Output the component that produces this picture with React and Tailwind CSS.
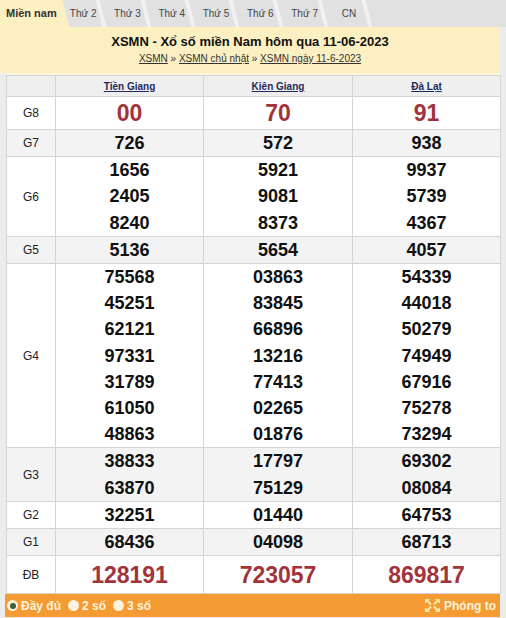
import React from 'react';

const tabs = ['Thứ 2', 'Thứ 3', 'Thứ 4', 'Thứ 5', 'Thứ 6', 'Thứ 7', 'CN'];
const provinces = ['Tiền Giang', 'Kiên Giang', 'Đà Lạt'];

const rows = [
  { label: 'G8', big: true, cols: [['00'], ['70'], ['91']] },
  { label: 'G7', cols: [['726'], ['572'], ['938']] },
  { label: 'G6', cols: [['1656', '2405', '8240'], ['5921', '9081', '8373'], ['9937', '5739', '4367']] },
  { label: 'G5', cols: [['5136'], ['5654'], ['4057']] },
  {
    label: 'G4',
    cols: [
      ['75568', '45251', '62121', '97331', '31789', '61050', '48863'],
      ['03863', '83845', '66896', '13216', '77413', '02265', '01876'],
      ['54339', '44018', '50279', '74949', '67916', '75278', '73294'],
    ],
  },
  { label: 'G3', cols: [['38833', '63870'], ['17797', '75129'], ['69302', '08084']] },
  { label: 'G2', cols: [['32251'], ['01440'], ['64753']] },
  { label: 'G1', cols: [['68436'], ['04098'], ['68713']] },
  { label: 'ĐB', big: true, special: true, cols: [['128191'], ['723057'], ['869817']] },
];

function ExpandIcon() {
  return (
    <svg width="15" height="13" viewBox="0 0 15 13" className="mr-[4px]">
      <g fill="#fbe7a8">
        <path d="M0 0 L5 0 L3.6 1.6 L6.8 4.8 L5.3 6.2 L2.1 3 L0 4.6 Z" />
        <path d="M15 0 L10 0 L11.4 1.6 L8.2 4.8 L9.7 6.2 L12.9 3 L15 4.6 Z" />
        <path d="M0 13 L5 13 L3.6 11.4 L6.8 8.2 L5.3 6.8 L2.1 10 L0 8.4 Z" />
        <path d="M15 13 L10 13 L11.4 11.4 L8.2 8.2 L9.7 6.8 L12.9 10 L15 8.4 Z" />
      </g>
    </svg>
  );
}

export default function App() {
  return (
    <div className="w-[506px] h-[618px] overflow-hidden bg-[#ececec] font-['Liberation_Sans',Arial,sans-serif] text-[#222]">
      {/* tabs */}
      <div className="flex h-[27px] bg-[#e1e1e1]">
        <div className="relative w-[61px] h-full bg-[#fcefc2] flex items-center pl-[6px] text-[11px] font-bold text-[#333]">
          Miền nam
          <span className="absolute -right-[5px] top-0 h-full w-[8px] bg-[#fcefc2] skew-x-[14deg]" />
        </div>
        {tabs.map((t) => (
          <div key={t} className="relative w-[44.3px] h-full flex items-center justify-center text-[10px] text-[#444]">
            {t}
            <span className="absolute right-[2px] top-0 h-full w-[4px] bg-[#f1f1f1] skew-x-[14deg]" />
          </div>
        ))}
      </div>

      {/* heading */}
      <div className="w-[500px] h-[46px] bg-[#fcefc2] flex flex-col items-center pt-[7px]">
        <div className="text-[13px] font-bold text-[#111] leading-[16px]">XSMN - Xổ số miền Nam hôm qua 11-06-2023</div>
        <div className="text-[10px] text-[#333] mt-[3px] leading-[12px]">
          <span className="underline">XSMN</span> » <span className="underline">XSMN chủ nhật</span> »{' '}
          <span className="underline">XSMN ngày 11-6-2023</span>
        </div>
      </div>
      <div className="ml-[6px] w-[494px] h-[2px] bg-[#fdf6dc]" />

      {/* results */}
      <table className="ml-[6px] w-[494px] border-collapse table-fixed bg-white">
        <colgroup>
          <col className="w-[49px]" />
          <col className="w-[148px]" />
          <col className="w-[149px]" />
          <col className="w-[148px]" />
        </colgroup>
        <thead>
          <tr className="h-[21px] bg-[#efefef]">
            <th className="border border-[#d4d4d4]" />
            {provinces.map((p) => (
              <th key={p} className="border border-[#d4d4d4] text-[10px] font-bold text-[#1f2a5c] underline">
                {p}
              </th>
            ))}
          </tr>
        </thead>
        <tbody>
          {rows.map((r, i) => (
            <tr key={r.label} className={i % 2 === 1 ? 'bg-[#f3f3f3]' : 'bg-white'}>
              <td className={`border border-[#d4d4d4] text-center text-[12px] text-[#222] ${r.label === 'ĐB' ? 'h-[38px]' : r.big ? 'h-[33px]' : ''}`}>
                {r.label}
              </td>
              {r.cols.map((c, j) => (
                <td key={j} className="border border-[#d4d4d4] text-center align-middle">
                  {c.map((n) => (
                    <div
                      key={n}
                      className={
                        r.big
                          ? 'text-[23px] font-bold text-[#a3333b] leading-[26px]'
                          : 'text-[18px] font-bold text-[#111] leading-[26.2px]'
                      }
                    >
                      {n}
                    </div>
                  ))}
                </td>
              ))}
            </tr>
          ))}
        </tbody>
      </table>

      {/* footer */}
      <div className="ml-[5px] w-[495px] h-[23px] bg-[#f49b33] flex items-center text-[12px] font-bold text-[#fdf3dc]">
        <span className="ml-[2px] w-[11px] h-[11px] rounded-full bg-[#fdf3dc] flex items-center justify-center">
          <span className="w-[6px] h-[6px] rounded-full bg-[#3f5e3a]" />
        </span>
        <span className="ml-[3px]">Đầy đủ</span>
        <span className="ml-[7px] w-[11px] h-[11px] rounded-full bg-[#fdf3dc]" />
        <span className="ml-[3px]">2 số</span>
        <span className="ml-[7px] w-[11px] h-[11px] rounded-full bg-[#fdf3dc]" />
        <span className="ml-[3px]">3 số</span>
        <span className="ml-auto mr-[4px] flex items-center">
          <ExpandIcon />
          Phóng to
        </span>
      </div>
    </div>
  );
}
